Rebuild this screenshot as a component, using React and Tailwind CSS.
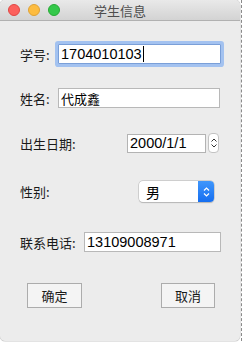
import React from "react";

const cjk = { fontFamily: '"Noto Sans CJK SC", "Liberation Sans", sans-serif' };
const num = { fontFamily: '"Liberation Sans", "Noto Sans CJK SC", sans-serif' };

function Light({ color, border }) {
  return <div className={`w-[12px] h-[12px] rounded-full ${color} ${border} border`} />;
}

export default function App() {
  return (
    <div className="w-[242px] h-[343px] bg-white flex">
      <div className="w-[240px] h-[341px] rounded-[5px] bg-[#ececec] flex flex-col overflow-hidden shadow-[0_0_0_0.5px_#c8c8c8]">
        {/* title bar */}
        <div className="h-[21px] shrink-0 bg-gradient-to-b from-[#e9e9e9] to-[#d3d3d3] border-b border-[#b1b1b1] flex items-center relative">
          <div className="flex items-center gap-[8px] pl-[8px]">
            <div className="w-[12px] h-[12px] rounded-full bg-[#fc605c] border border-[#df4744]" />
            <div className="w-[12px] h-[12px] rounded-full bg-[#fdbc40] border border-[#dea236]" />
            <div className="w-[12px] h-[12px] rounded-full bg-[#34c84a] border border-[#27aa35]" />
          </div>
          <div className="absolute inset-0 flex items-center justify-center text-[13px] text-[#4d4d4d] leading-none" style={cjk}>
            学生信息
          </div>
        </div>

        <div className="flex flex-col pl-[20px] text-[13px] text-[#1a1a1a]" style={cjk}>
          {/* 学号 */}
          <div className="mt-[23px] h-[20px] flex items-center">
            <span className="w-[38px] leading-none">学号:</span>
            <div className="ml-0 w-[163px] h-[20px] bg-white border border-[#7a9fd8] rounded-[1px] ring-[3px] ring-[#a3c2f0] flex items-center pl-[2px]">
              <span className="text-[14.5px] leading-none text-black" style={num}>1704010103</span>
              <span className="w-[1px] h-[16px] bg-black ml-[1px]" />
            </div>
          </div>

          {/* 姓名 */}
          <div className="mt-[24px] h-[20px] flex items-center">
            <span className="w-[38px] leading-none">姓名:</span>
            <div className="w-[162px] h-[20px] bg-white border border-[#b8b8b8] flex items-center pl-[2px]">
              <span className="text-[13px] leading-none text-black">代成鑫</span>
            </div>
          </div>

          {/* 出生日期 */}
          <div className="mt-[25px] h-[20px] flex items-center">
            <span className="w-[107px] leading-none">出生日期:</span>
            <div className="w-[79px] h-[19px] bg-white border border-[#b3b3b3] flex items-center pl-[2px]">
              <span className="text-[14.5px] leading-none text-black" style={num}>2000/1/1</span>
            </div>
            <div className="ml-[2px] w-[11px] h-[20px] bg-white rounded-[4px] border border-[#c3c3c3] flex flex-col items-center justify-center gap-[2px]">
              <svg width="6" height="4" viewBox="0 0 6 4"><path d="M0.5 3.5 L3 1 L5.5 3.5" fill="none" stroke="#333" strokeWidth="1" /></svg>
              <svg width="6" height="4" viewBox="0 0 6 4"><path d="M0.5 0.5 L3 3 L5.5 0.5" fill="none" stroke="#333" strokeWidth="1" /></svg>
            </div>
          </div>

          {/* 性别 */}
          <div className="mt-[28px] h-[21px] flex items-center">
            <span className="w-[119px] leading-none">性别:</span>
            <div className="w-[75px] h-[21px] bg-white rounded-[4px] shadow-[0_0_0_0.5px_#b5b5b5,0_0.5px_1px_#bbb] flex overflow-hidden">
              <div className="flex-1 flex items-center pl-[7px]">
                <span className="text-[14px] leading-none text-black">男</span>
              </div>
              <div className="w-[16px] bg-gradient-to-b from-[#3f96fb] to-[#156ef0] flex flex-col items-center justify-center gap-[2px]">
                <svg width="7" height="4" viewBox="0 0 7 4"><path d="M1 3.5 L3.5 1 L6 3.5" fill="none" stroke="#fff" strokeWidth="1.2" /></svg>
                <svg width="7" height="4" viewBox="0 0 7 4"><path d="M1 0.5 L3.5 3 L6 0.5" fill="none" stroke="#fff" strokeWidth="1.2" /></svg>
              </div>
            </div>
          </div>

          {/* 联系电话 */}
          <div className="mt-[30px] h-[20px] flex items-center">
            <span className="w-[64px] leading-none">联系电话:</span>
            <div className="w-[137px] h-[20px] bg-white border border-[#b8b8b8] flex items-center pl-[2px]">
              <span className="text-[14.5px] leading-none text-black" style={num}>13109008971</span>
            </div>
          </div>

          {/* buttons */}
          <div className="mt-[31px] h-[25px] flex items-center">
            <div className="ml-[7px] w-[55px] h-[25px] bg-[#f4f4f4] border border-[#acacac] flex items-center justify-center text-[13px] leading-none">
              确定
            </div>
            <div className="ml-[79px] w-[54px] h-[25px] bg-[#f4f4f4] border border-[#acacac] flex items-center justify-center text-[13px] leading-none">
              取消
            </div>
          </div>
        </div>
      </div>
      <div className="w-[1px] h-[341px] ml-[1px] border-l border-dashed border-[#8a8a8a]" />
    </div>
  );
}
